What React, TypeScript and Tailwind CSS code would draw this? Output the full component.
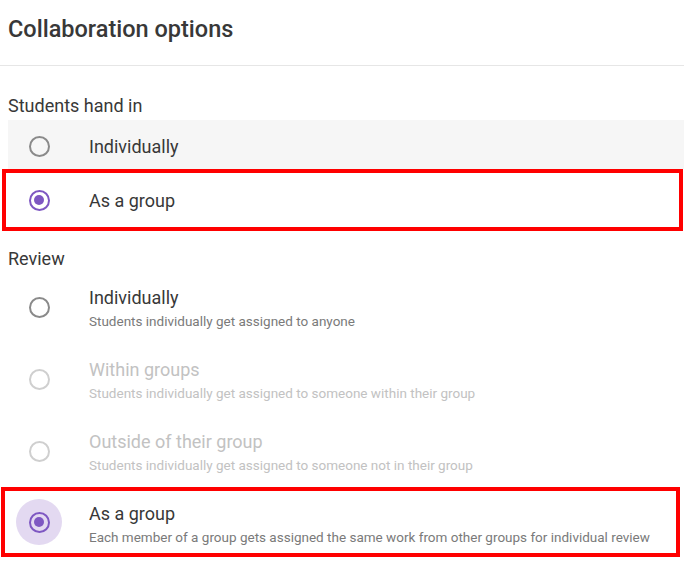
import React from "react";

type Option = {
  label: string;
  hint?: string;
  disabled?: boolean;
};

const handInOptions: Option[] = [{ label: "Individually" }, { label: "As a group" }];

const reviewOptions: Option[] = [
  { label: "Individually", hint: "Students individually get assigned to anyone" },
  {
    label: "Within groups",
    hint: "Students individually get assigned to someone within their group",
    disabled: true,
  },
  {
    label: "Outside of their group",
    hint: "Students individually get assigned to someone not in their group",
    disabled: true,
  },
  {
    label: "As a group",
    hint: "Each member of a group gets assigned the same work from other groups for individual review",
  },
];

function Radio({ checked, disabled, focused }: { checked?: boolean; disabled?: boolean; focused?: boolean }) {
  const ring = checked ? "border-[#7e57c2]" : disabled ? "border-[#cfcfcf]" : "border-[#8a8a8a]";
  return (
    <span
      className={`flex h-[46px] w-[46px] items-center justify-center rounded-full ${
        focused ? "bg-[#e3d9f1]" : ""
      }`}
    >
      <span className={`flex h-[21px] w-[21px] items-center justify-center rounded-full border-2 ${ring}`}>
        {checked && <span className="h-[10px] w-[10px] rounded-full bg-[#7e57c2]" />}
      </span>
    </span>
  );
}

export default function App() {
  return (
    <div className="min-h-[566px] w-[684px] bg-white text-[#383838]" style={{ fontFamily: "Roboto, 'Noto Sans', sans-serif" }}>
      {/* Header */}
      <div className="flex h-[66px] items-center border-b border-[#e6e6e6] px-2 pb-2">
        <h1 className="text-[23.5px] font-medium leading-7 text-[#383838]">Collaboration options</h1>
      </div>

      {/* Students hand in */}
      <div className="mt-[28px] px-2 text-[18px] leading-6">Students hand in</div>
      <div className="mt-0.5">
        <div className="ml-2 flex h-[49px] items-center bg-[#f6f6f6]">
          <div className="ml-2 mt-1">
            <Radio />
          </div>
          <span className="ml-[27px] mt-1 text-[18px]">{handInOptions[0].label}</span>
        </div>
        <div className="ml-[2px] mr-[1px] flex h-[62px] items-center border-4 border-[#ff0000]">
          <div className="ml-[10px]">
            <Radio checked />
          </div>
          <span className="ml-[27px] text-[18px]">{handInOptions[1].label}</span>
        </div>
      </div>

      {/* Review */}
      <div className="mt-4 px-2 text-[18px] leading-6">Review</div>
      <div>
        {reviewOptions.slice(0, 3).map((o) => (
          <div key={o.label} className="flex h-[72px] items-center">
            <div className="ml-4">
              <Radio disabled={o.disabled} />
            </div>
            <div className={`ml-[27px] mt-[4px] ${o.disabled ? "text-[#c2c2c2]" : ""}`}>
              <div className="text-[18px] leading-6">{o.label}</div>
              <div className={`text-[13.5px] leading-[22px] ${o.disabled ? "text-[#c2c2c2]" : "text-[#7a7a7a]"}`}>{o.hint}</div>
            </div>
          </div>
        ))}
        <div className="ml-[1px] mr-[4px] flex h-[70px] items-center border-4 border-[#ff0000]">
          <div className="ml-[11px]">
            <Radio checked focused />
          </div>
          <div className="ml-[27px] mt-[5px]">
            <div className="text-[18px] leading-6">{reviewOptions[3].label}</div>
            <div className="text-[13.5px] leading-[22px] text-[#7a7a7a]">{reviewOptions[3].hint}</div>
          </div>
        </div>
      </div>
    </div>
  );
}
